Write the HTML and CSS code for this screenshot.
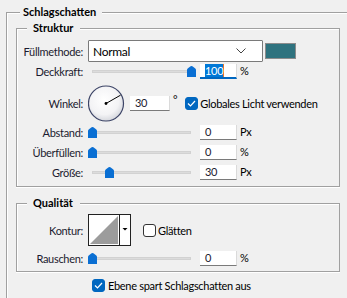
FILE: index.html
```html
<!DOCTYPE html>
<html lang="de">
<head>
    <meta charset="UTF-8">
    <meta name="viewport" content="width=device-width, initial-scale=1.0">
    <title>Schlagschatten</title>
    <link rel="stylesheet" href="styles.css">
</head>
<body>
    <fieldset class="group outer">
        <legend>Schlagschatten</legend>

        <fieldset class="group inner struktur">
            <legend>Struktur</legend>

            <div class="row row-fill">
                <span class="label">Füllmethode:</span>
                <div class="select">
                    <span>Normal</span>
                    <svg class="chevron" width="10" height="6" viewBox="0 0 10 6"><path d="M0.5 0.5 L5 5 L9.5 0.5" fill="none" stroke="#444" stroke-width="1"/></svg>
                </div>
                <span class="swatch"></span>
            </div>

            <div class="row">
                <span class="label">Deckkraft:</span>
                <div class="slider"><div class="track">
                    <svg class="thumb" style="left: 100%" width="9" height="11" viewBox="0 0 9 11"><path d="M0 4 Q0 3 1 2.2 L3.6 0.3 Q4.5 -0.3 5.4 0.3 L8 2.2 Q9 3 9 4 V11 H0 Z" fill="#0a6fd3"/></svg>
                </div></div>
                <span class="field focus"><span class="sel">100</span></span>
                <span class="unit">%</span>
            </div>

            <div class="row row-angle">
                <span class="label">Winkel:</span>
                <svg class="dial" width="38" height="40" viewBox="0 0 38 40">
                    <defs>
                        <radialGradient id="dialFill" cx="45%" cy="40%" r="60%">
                            <stop offset="0" stop-color="#ffffff"/>
                            <stop offset="0.7" stop-color="#f3f3f5"/>
                            <stop offset="1" stop-color="#d6d8de"/>
                        </radialGradient>
                    </defs>
                    <circle cx="18" cy="19.5" r="17.5" fill="url(#dialFill)" stroke="#3c4466" stroke-width="1.2"/>
                    <line x1="18" y1="19.5" x2="32.5" y2="11.2" stroke="#000" stroke-width="1"/>
                    <circle cx="18" cy="19.5" r="1.4" fill="#000"/>
                </svg>
                <span class="field angle">30</span>
                <span class="unit deg">°</span>
                <span class="check">
                    <span class="box checked"><svg width="9" height="7" viewBox="0 0 9 7"><path d="M1 3.5 L3.5 6 L8 1" fill="none" stroke="#fff" stroke-width="1.2"/></svg></span>
                    Globales Licht verwenden
                </span>
            </div>

            <div class="row">
                <span class="label">Abstand:</span>
                <div class="slider"><div class="track">
                    <svg class="thumb" style="left: 0%" width="9" height="11" viewBox="0 0 9 11"><path d="M0 4 Q0 3 1 2.2 L3.6 0.3 Q4.5 -0.3 5.4 0.3 L8 2.2 Q9 3 9 4 V11 H0 Z" fill="#0a6fd3"/></svg>
                </div></div>
                <span class="field">0</span>
                <span class="unit">Px</span>
            </div>

            <div class="row">
                <span class="label">Überfüllen:</span>
                <div class="slider"><div class="track">
                    <svg class="thumb" style="left: 0%" width="9" height="11" viewBox="0 0 9 11"><path d="M0 4 Q0 3 1 2.2 L3.6 0.3 Q4.5 -0.3 5.4 0.3 L8 2.2 Q9 3 9 4 V11 H0 Z" fill="#0a6fd3"/></svg>
                </div></div>
                <span class="field">0</span>
                <span class="unit">%</span>
            </div>

            <div class="row">
                <span class="label">Größe:</span>
                <div class="slider"><div class="track">
                    <svg class="thumb" style="left: 17.7%" width="9" height="11" viewBox="0 0 9 11"><path d="M0 4 Q0 3 1 2.2 L3.6 0.3 Q4.5 -0.3 5.4 0.3 L8 2.2 Q9 3 9 4 V11 H0 Z" fill="#0a6fd3"/></svg>
                </div></div>
                <span class="field">30</span>
                <span class="unit">Px</span>
            </div>
        </fieldset>

        <fieldset class="group inner qualitaet">
            <legend>Qualität</legend>

            <div class="row row-contour">
                <span class="label">Kontur:</span>
                <svg class="contour" width="43" height="32" viewBox="0 0 43 32">
                    <rect x="0.5" y="0.5" width="42" height="31" fill="#fff" stroke="#222"/>
                    <polygon points="2,30 30,2 30,30" fill="#9c9c9c"/>
                    <line x1="31.5" y1="0" x2="31.5" y2="32" stroke="#222"/>
                    <polygon points="34.5,14 39.5,14 37,16.5" fill="#000"/>
                </svg>
                <span class="check smooth">
                    <span class="box"></span>
                    Glätten
                </span>
            </div>

            <div class="row">
                <span class="label">Rauschen:</span>
                <div class="slider"><div class="track">
                    <svg class="thumb" style="left: 0%" width="9" height="11" viewBox="0 0 9 11"><path d="M0 4 Q0 3 1 2.2 L3.6 0.3 Q4.5 -0.3 5.4 0.3 L8 2.2 Q9 3 9 4 V11 H0 Z" fill="#0a6fd3"/></svg>
                </div></div>
                <span class="field">0</span>
                <span class="unit">%</span>
            </div>
        </fieldset>

        <div class="row row-knockout">
            <span class="check">
                <span class="box checked"><svg width="9" height="7" viewBox="0 0 9 7"><path d="M1 3.5 L3.5 6 L8 1" fill="none" stroke="#fff" stroke-width="1.2"/></svg></span>
                Ebene spart Schlagschatten aus
            </span>
        </div>
    </fieldset>
</body>
</html>
```

FILE: styles.css
```css
body {
    margin: 0;
    width: 347px;
    height: 298px;
    overflow: hidden;
    background-color: #f0f0f0;
    font-family: Lato, "Liberation Sans", sans-serif;
    font-size: 11px;
    letter-spacing: -0.3px;
    color: #1b1b2f;
}
.group {
    margin: 0;
    border: 1px solid #a0a0a0;
    box-shadow: inset 1px 1px 0 #fff, 0 1px 0 #fff;
    min-width: 0;
}
.group > legend {
    font-weight: bold;
    letter-spacing: 0;
    color: #000;
    line-height: 14px;
    background-color: #f0f0f0;
}
.outer {
    margin: 5px 0 0 6px;
    width: 340px;
    padding: 2px 0 20px 9px;
}
.outer > legend {
    margin-left: 4px;
    padding: 0 6px 0 3px;
}
.inner {
    width: 324px;
    box-sizing: border-box;
}
.inner > legend {
    margin-left: 10px;
    padding: 0 7px 0 6px;
}
.struktur {
    padding: 5px 0 6px 0;
}
.qualitaet {
    margin-top: 9px;
    padding: 4px 0 5px 0;
}
.row {
    display: flex;
    align-items: center;
    height: 15px;
    margin-top: 5px;
}
.row-fill {
    height: 22px;
    margin-top: 0;
}
.row-fill + .row {
    margin-top: 2px;
}
.row-angle {
    height: 39px;
}
.row-angle + .row {
    margin-top: 2px;
}
.row-contour {
    height: 32px;
    margin-top: 0;
}
.label {
    flex: none;
    width: 66px;
    margin-right: 5px;
    text-align: right;
}
.select {
    flex: none;
    display: flex;
    align-items: center;
    width: 175px;
    height: 22px;
    box-sizing: border-box;
    padding-left: 4px;
    background-color: #fff;
    border: 1px solid #7a7a7a;
    border-radius: 1px;
    font-size: 12px;
    color: #000;
}
.chevron {
    margin-left: auto;
    margin-right: 16px;
}
.swatch {
    width: 31px;
    height: 16px;
    margin-left: 2px;
    box-sizing: border-box;
    background-color: #2f737f;
    border: 1px solid #8c8c8c;
}
.slider {
    flex: none;
    width: 108px;
    box-sizing: border-box;
    padding: 0 5px 0 4px;
}
.track {
    position: relative;
    height: 3px;
    background-color: #dcdcdc;
    box-shadow: inset 0 0 0 1px #d2d2d2;
}
.thumb {
    position: absolute;
    top: -4px;
    margin-left: -4.5px;
}
.field {
    flex: none;
    width: 37px;
    height: 15px;
    box-sizing: border-box;
    margin-left: 4px;
    padding-left: 5px;
    background-color: #fff;
    border-bottom: 1px solid #7a7a7a;
    border-right: 1px solid #dadada;
    line-height: 14px;
}
.field.focus {
    border-bottom: 2px solid #0067c0;
    line-height: 13px;
}
.sel {
    background-color: #0078d7;
    color: #fff;
    border-right: 1px solid #e8742a;
}
.unit {
    align-self: flex-start;
    margin-left: 3px;
    line-height: 13px;
    color: #000;
}
.dial {
    flex: none;
}
.field.angle {
    width: 40px;
    margin-left: 4px;
}
.unit.deg {
    margin-top: 9px;
}
.check {
    display: flex;
    align-items: center;
    gap: 2px;
    color: #000;
}
.row-angle .check {
    margin-left: 8px;
}
.box {
    flex: none;
    display: flex;
    align-items: center;
    justify-content: center;
    width: 13px;
    height: 13px;
    box-sizing: border-box;
    border-radius: 3px;
    background-color: #fff;
    border: 1px solid #333;
}
.box.checked {
    background-color: #0067c0;
    border-color: #0067c0;
}
.contour {
    flex: none;
}
.smooth {
    margin-left: 12px;
}
.row-knockout {
    height: 13px;
    margin-top: 7px;
    padding-left: 76px;
}
.row-knockout .check {
    gap: 3px;
}
```
